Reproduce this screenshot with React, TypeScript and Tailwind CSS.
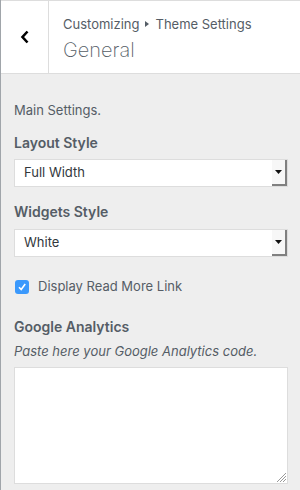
const font = { fontFamily: "Inter, 'Liberation Sans', sans-serif" };

const SelectBox = ({ value }: { value: string }) => (
  <div className="flex h-[28px] w-[274px] border border-[#dddddd] bg-white">
    <div className="flex grow items-center pl-[9px] text-[13px] text-[#32373c]">
      {value}
    </div>
    <div className="flex w-[15px] items-center justify-center border-r-2 border-b-2 border-[#808080] bg-[#f7f7f7]">
      <svg width="7" height="4" viewBox="0 0 7 4">
        <path d="M0 0h7L3.5 4z" fill="#111" />
      </svg>
    </div>
  </div>
);

export default function App() {
  return (
    <div
      className="flex h-[490px] w-[300px] flex-col border-l border-[#a0a5aa] bg-[#eeeeee] text-[#555d66]"
      style={font}
    >
      <header className="flex h-[74px] shrink-0 border-t border-b border-[#dddddd] bg-white">
        <button
          aria-label="Back"
          className="flex w-[48px] items-center justify-center border-r border-[#dddddd]"
        >
          <svg width="10" height="14" viewBox="0 0 10 14">
            <path
              d="M7.5 1.5L2.5 7l5 5.5"
              fill="none"
              stroke="#000"
              strokeWidth="2.6"
            />
          </svg>
        </button>
        <div className="flex flex-col pl-[14px] pt-[13px]">
          <div className="flex items-center text-[13px] leading-[20px] text-[#555d66]">
            Customizing
            <svg width="4" height="6" viewBox="0 0 4 6" className="mx-[6px]">
              <path d="M0 0l4 3-4 3z" fill="#555d66" />
            </svg>
            Theme Settings
          </div>
          <h1 className="mt-[2px] text-[20px] font-extralight leading-[28px] text-[#555d66]">
            General
          </h1>
        </div>
      </header>

      <main className="flex flex-col px-[13px] pt-[26px]">
        <p className="text-[13px] leading-[20px]">Main Settings.</p>

        <label className="mt-[13px] mb-[6px] text-[14px] font-semibold leading-[20px]">
          Layout Style
        </label>
        <SelectBox value="Full Width" />

        <label className="mt-[15px] mb-[7px] text-[14px] font-semibold leading-[20px]">
          Widgets Style
        </label>
        <SelectBox value="White" />

        <div className="mt-[20px] flex h-[20px] items-center gap-[9px]">
          <span className="ml-[1px] flex h-[14px] w-[14px] items-center justify-center rounded-[3px] bg-[#3b99fc]">
            <svg width="10" height="10" viewBox="0 0 10 10">
              <path
                d="M2 5.2l2.2 2.3L8.2 2"
                fill="none"
                stroke="#fff"
                strokeWidth="1.6"
              />
            </svg>
          </span>
          <span className="text-[13px]">Display Read More Link</span>
        </div>

        <label className="mt-[20px] text-[14px] font-semibold leading-[20px]">
          Google Analytics
        </label>
        <p className="mt-[4px] text-[13px] italic leading-[20px]">
          Paste here your Google Analytics code.
        </p>
        <div className="relative mt-[6px] h-[117px] w-[274px] border border-[#dddddd] bg-white">
          <textarea className="h-full w-full resize-none bg-transparent outline-none" />
          <svg
            className="absolute right-[1px] bottom-[1px]"
            width="10"
            height="10"
            viewBox="0 0 10 10"
          >
            <path
              d="M10 1L1 10M10 4L4 10M10 7L7 10"
              stroke="#9a9a9a"
              strokeWidth="1"
            />
          </svg>
        </div>
      </main>
    </div>
  );
}
